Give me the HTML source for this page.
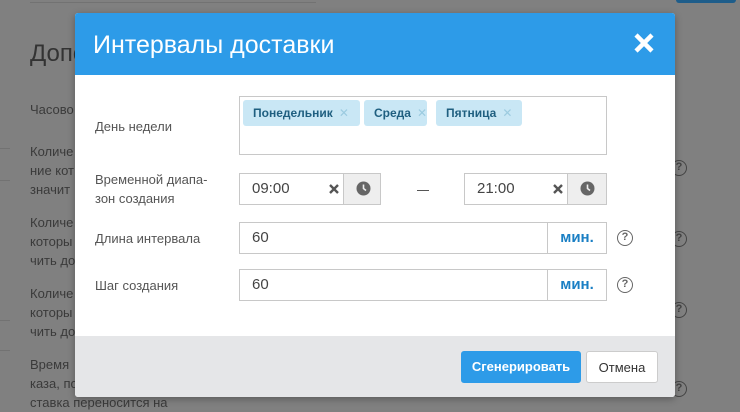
<!DOCTYPE html>
<html><head><meta charset="utf-8"><style>
*{box-sizing:border-box;margin:0;padding:0}
body{width:740px;height:403px;overflow:hidden;background:#808080;font-family:"Liberation Sans","DejaVu Sans",sans-serif;position:relative}
.bg{position:absolute;color:#3a3a3a;font-size:13px;left:30px}
.ln{position:absolute;background:#727272;height:1px}
.modal{position:absolute;left:75px;top:13px;width:600px;height:384px;background:#fff;border-radius:3px;overflow:hidden;box-shadow:0 2px 8px rgba(0,0,0,.3)}
.hd{height:62px;background:#2d9be8;color:#fff;font-size:25px;padding:18px 0 0 18px;position:relative}
.cl{position:absolute;left:558px;top:19px;width:22px;height:22px}
.ft{position:absolute;left:0;top:323px;width:600px;height:61px;background:#e5e6e8}
.a{position:absolute}
.lbl{position:absolute;left:20px;font-size:13px;color:#555;line-height:19px}
.box{position:absolute;border:1px solid #c8c8c8;background:#fff}
.tag{position:absolute;top:3px;height:26px;background:#c9e7f5;border-radius:3px;color:#1f5f80;font-size:12px;font-weight:bold;padding:6px 0 0 10px}
.tag span{color:#9ccbe0;font-weight:normal;margin-left:6px}
.val{position:absolute;font-size:15px;color:#444;top:6px;left:12px}
.add{position:absolute;top:0;bottom:0;border-left:1px solid #c8c8c8;background:#eee}
.min{position:absolute;top:0;bottom:0;border-left:1px solid #c8c8c8;color:#1a7fc4;font-weight:bold;font-size:15px;text-align:center;padding-top:6px}
.q{position:absolute;width:16px;height:16px;border:1.5px solid #666;border-radius:50%;font-size:11px;color:#666;text-align:center;line-height:13px;font-weight:bold}
.btn{position:absolute;height:32px;border-radius:3px;font-size:13px;font-weight:bold;text-align:center;padding-top:8px}
</style></head><body>
<div class="ln" style="left:30px;top:2px;width:286px"></div>
<div class="bg" style="top:40px;font-size:24px;left:30px;color:#333">Допо</div>
<div class="bg" style="top:102px">Часово</div>
<div class="bg" style="top:142px;line-height:19px">Количе<br>ние кот<br>значит</div>
<div class="bg" style="top:213px;line-height:19px">Количе<br>которы<br>чить до</div>
<div class="bg" style="top:284px;line-height:19px">Количе<br>которы<br>чить до</div>
<div class="bg" style="top:355px;line-height:19px">Время<br>каза, по<br>ставка переносится на</div>
<div class="ln" style="left:0;top:148px;width:10px"></div>
<div class="ln" style="left:0;top:180px;width:10px"></div>
<div class="ln" style="left:0;top:320px;width:10px"></div>
<div class="ln" style="left:0;top:350px;width:10px"></div>
<div class="a" style="left:676px;top:0;width:60px;height:3px;background:#1e5d8a;border-radius:0 0 3px 3px"></div>
<div class="q" style="left:671px;top:160px;border-color:#444;color:#444">?</div>
<div class="q" style="left:671px;top:231px;border-color:#444;color:#444">?</div>
<div class="q" style="left:671px;top:302px;border-color:#444;color:#444">?</div>
<div class="q" style="left:671px;top:381px;border-color:#444;color:#444">?</div>

<div class="modal">
 <div class="hd">Интервалы доставки
  <svg class="cl" viewBox="0 0 22 22"><path d="M3 3L19 19M19 3L3 19" stroke="#fff" stroke-width="4.5"/></svg>
 </div>
 <div class="lbl" style="top:104px">День недели</div>
 <div class="box" style="left:164px;top:83px;width:368px;height:59px">
  <div class="tag" style="left:3px;width:117px">Понедельник<span>✕</span></div>
  <div class="tag" style="left:124px;width:63px">Среда<span>✕</span></div>
  <div class="tag" style="left:196px;width:86px">Пятница<span>✕</span></div>
 </div>
 <div class="lbl" style="top:157px">Временной диапа-<br>зон создания</div>
 <div class="box" style="left:164px;top:160px;width:142px;height:32px">
  <div class="val">09:00</div>
  <svg class="a" style="left:89px;top:10px" width="10" height="10"><path d="M1 1L9 9M9 1L1 9" stroke="#555" stroke-width="2.4"/></svg>
  <div class="add" style="left:103px;right:0"><svg class="a" style="left:12px;top:7px" width="15" height="15" viewBox="0 0 15 15"><circle cx="7.5" cy="7.5" r="7" fill="#666"/><path d="M7.5 3.5V7.5L10 9.5" stroke="#eee" stroke-width="1.6" fill="none"/></svg></div>
 </div>
 <div class="a" style="left:342px;top:177px;width:12px;height:1px;background:#555"></div>
 <div class="box" style="left:389px;top:160px;width:143px;height:32px">
  <div class="val">21:00</div>
  <svg class="a" style="left:88px;top:10px" width="10" height="10"><path d="M1 1L9 9M9 1L1 9" stroke="#555" stroke-width="2.4"/></svg>
  <div class="add" style="left:102px;right:0"><svg class="a" style="left:12px;top:7px" width="15" height="15" viewBox="0 0 15 15"><circle cx="7.5" cy="7.5" r="7" fill="#666"/><path d="M7.5 3.5V7.5L10 9.5" stroke="#eee" stroke-width="1.6" fill="none"/></svg></div>
 </div>
 <div class="lbl" style="top:216px">Длина интервала</div>
 <div class="box" style="left:164px;top:209px;width:368px;height:32px"><div class="val">60</div><div class="min" style="left:307px;right:0">мин.</div></div>
 <div class="q" style="left:542px;top:217px">?</div>
 <div class="lbl" style="top:263px">Шаг создания</div>
 <div class="box" style="left:164px;top:256px;width:368px;height:32px"><div class="val">60</div><div class="min" style="left:307px;right:0">мин.</div></div>
 <div class="q" style="left:542px;top:264px">?</div>
 <div class="ft">
  <div class="btn" style="left:386px;top:15px;width:120px;background:#2d9be8;color:#fff">Сгенерировать</div>
  <div class="btn" style="left:511px;top:15px;width:72px;background:#fff;border:1px solid #ccc;color:#333;font-weight:normal">Отмена</div>
 </div>
</div>
</body></html>
